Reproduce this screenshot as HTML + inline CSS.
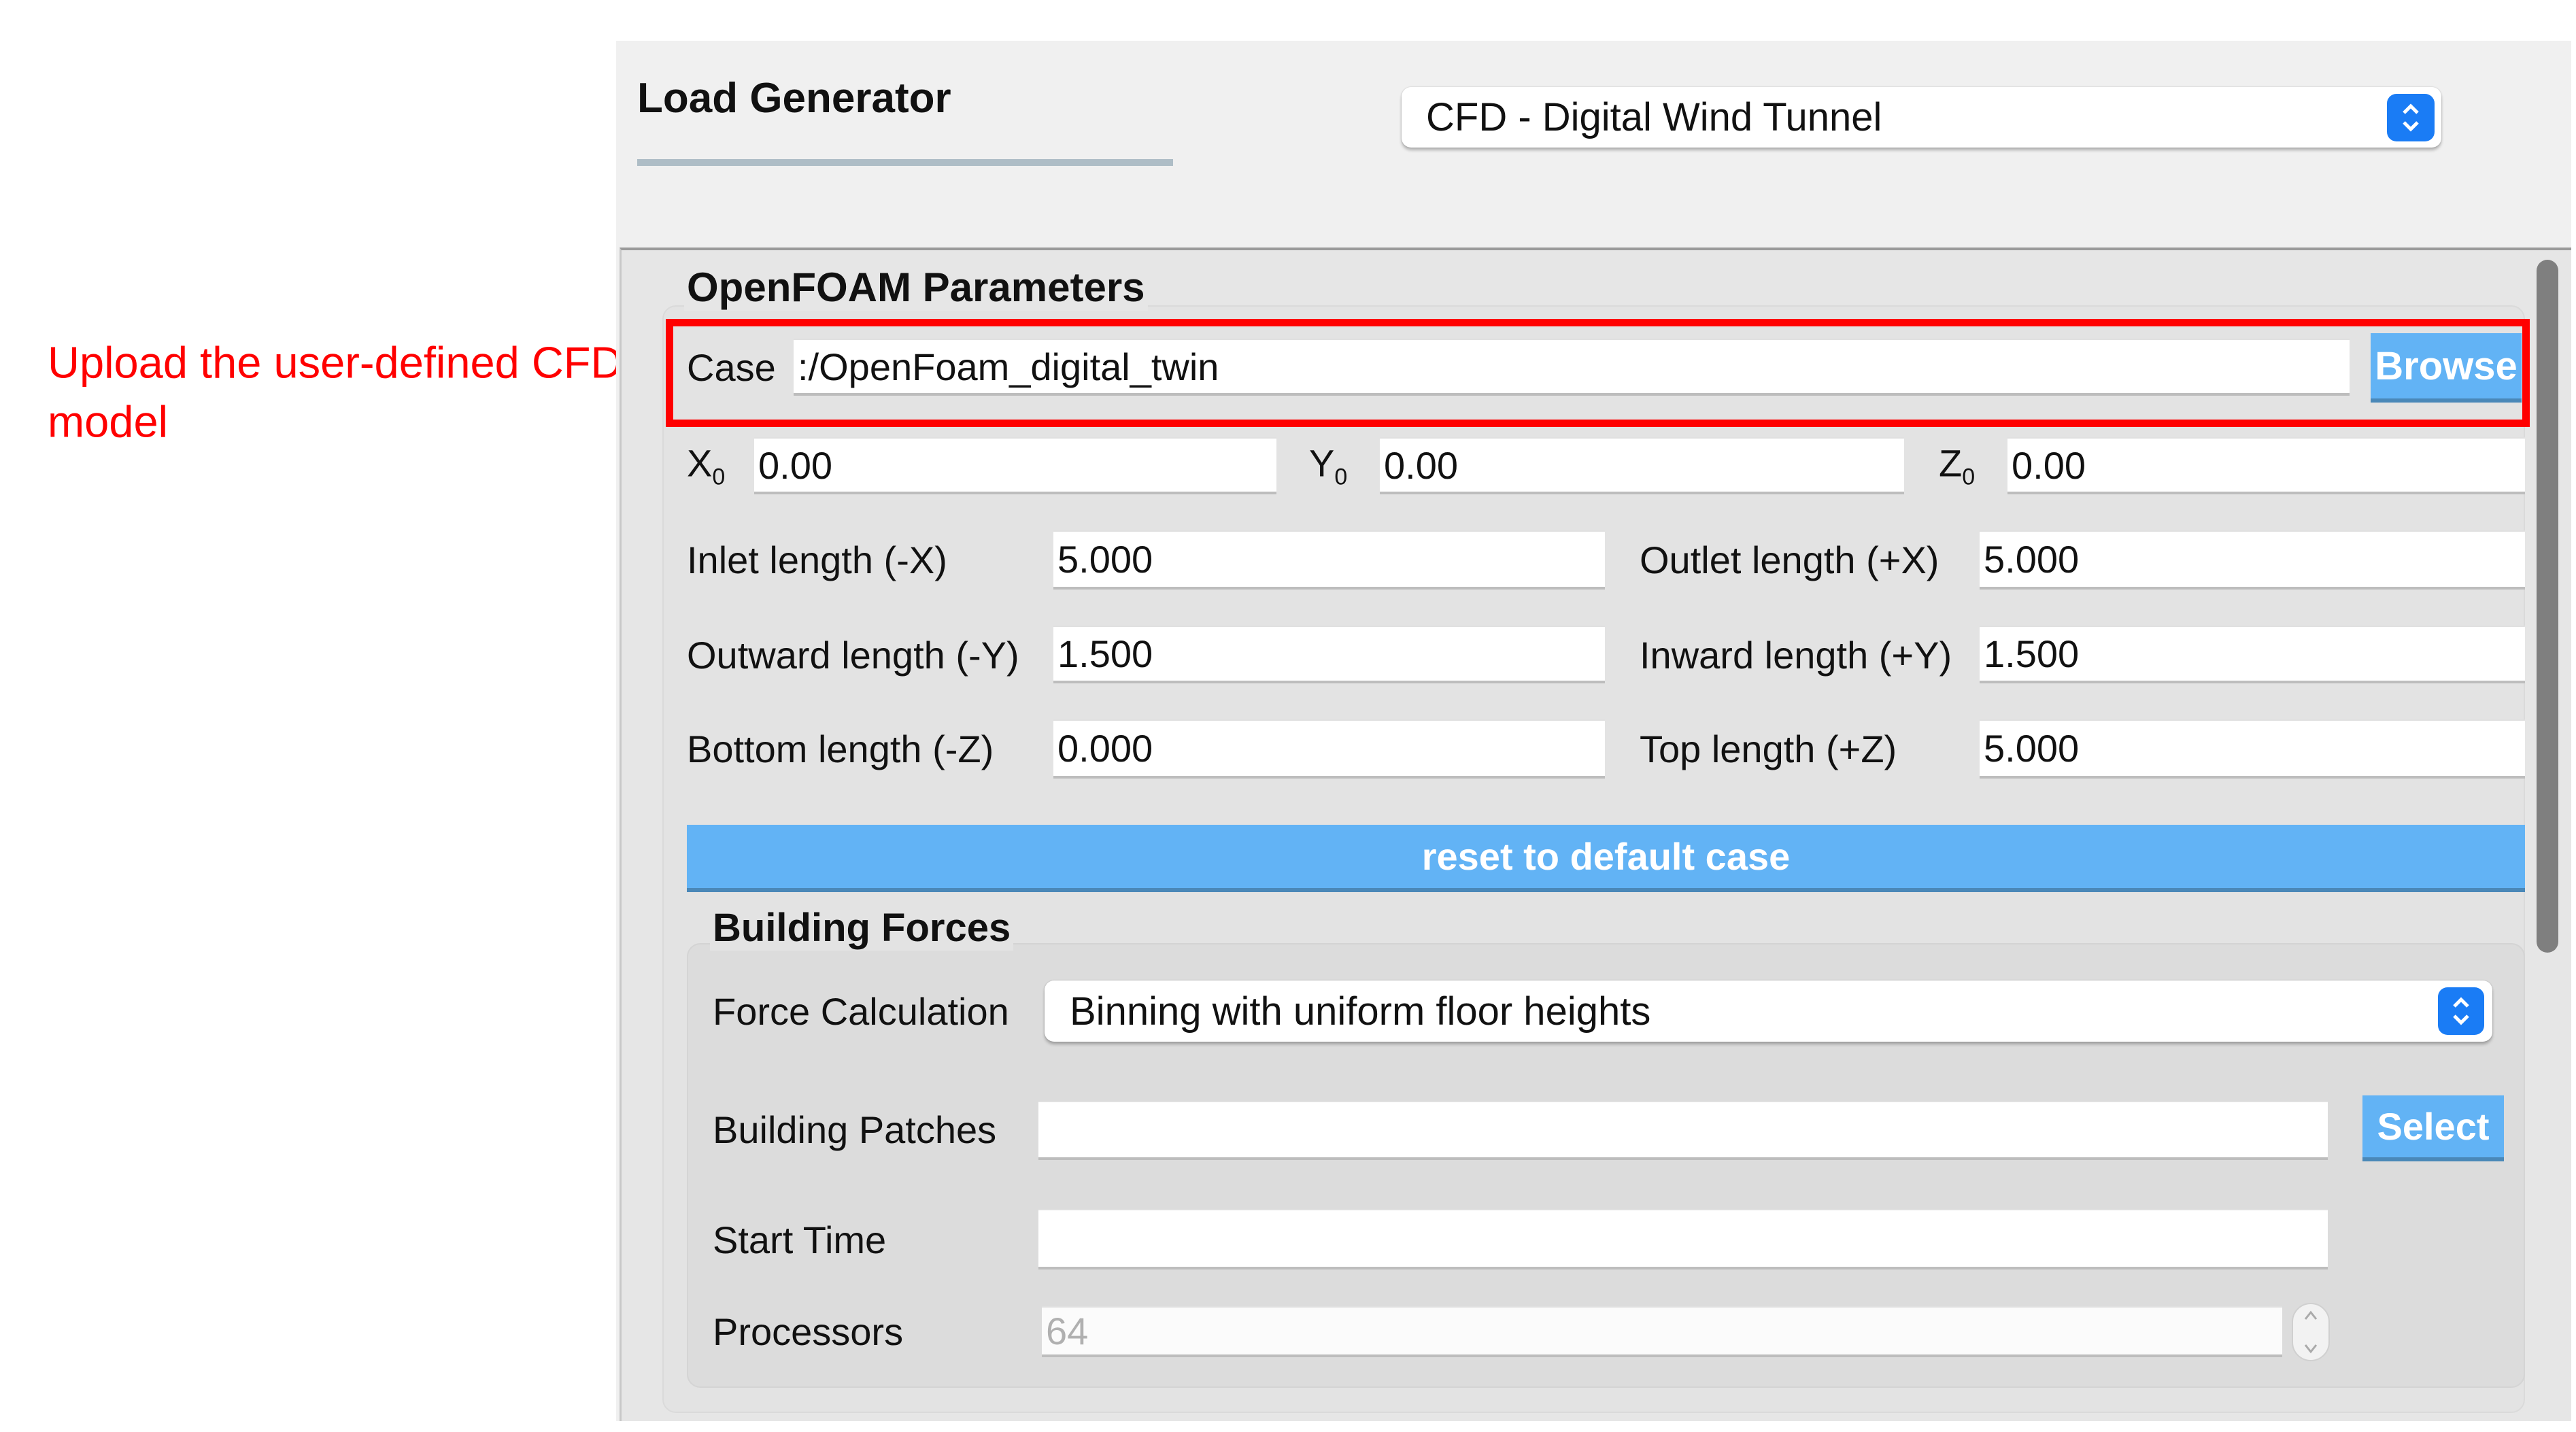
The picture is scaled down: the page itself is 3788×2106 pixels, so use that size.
<!DOCTYPE html>
<html><head><meta charset="utf-8"><style>
*{margin:0;padding:0;box-sizing:border-box}
body{width:3788px;height:2106px;background:#fff;position:relative;overflow:hidden;font-family:"Liberation Sans",sans-serif;color:#111}
.a{position:absolute}
.t{position:absolute;font-size:56px;line-height:1;transform:translateY(-50%);white-space:nowrap}
.b{font-weight:bold}
.in{position:absolute;background:#fff;border-bottom:4px solid #bdbdbd;border-top:2px solid #e0e0e0;font-size:56px;display:flex;align-items:center;padding-left:6px;white-space:nowrap}
.btn{position:absolute;background:#62b3f5;border-bottom:6px solid #4a88b8;color:#fff;font-weight:bold;font-size:56px;display:flex;align-items:center;justify-content:center}
.dd{position:absolute;background:#fff;border-radius:14px;box-shadow:0 4px 4px rgba(0,0,0,.25),0 0 2px rgba(0,0,0,.2);font-size:58px;display:flex;align-items:center}
.arr{position:absolute;background:#1a7cf5;border-radius:14px}
</style></head><body>
<div class="t" style="left:70px;top:533px;color:#f00;font-size:65px">Upload the user-defined CFD</div>
<div class="t" style="left:70px;top:620px;color:#f00;font-size:65px">model</div>

<div class="a" style="left:906px;top:60px;width:2875px;height:2030px;background:#f0f0f0"></div>
<div class="t b" style="left:937px;top:145px;font-size:62px">Load Generator</div>
<div class="a" style="left:937px;top:234px;width:788px;height:10px;background:#aebdc6"></div>
<div class="dd" style="left:2061px;top:128px;width:1529px;height:89px;padding-left:36px">CFD - Digital Wind Tunnel</div>
<div class="arr" style="left:3510px;top:138px;width:70px;height:70px"><svg width="70" height="70" viewBox="0 0 70 70"><path d="M25 28 L35 18 L45 28 M25 42 L35 52 L45 42" stroke="#fff" stroke-width="5" fill="none"/></svg></div>

<div class="a" style="left:911px;top:364px;width:2870px;height:1726px;background:#e6e6e6;border-top:4px solid #9a9a9a;border-left:3px solid #c8c8c8"></div>
<div class="a" style="left:3730px;top:382px;width:32px;height:1019px;background:#7f7f7f;border-radius:16px"></div>
<div class="a" style="left:974px;top:449px;width:2739px;height:1629px;background:#e3e3e3;border-radius:20px;border:2px solid #dadada"></div>
<div class="t b" style="left:1006px;top:423px;font-size:60px;background:#e6e6e6;padding:4px">OpenFOAM Parameters</div>

<div class="a" style="left:979px;top:469px;width:2741px;height:159px;border:11px solid #f00"></div>
<div class="t" style="left:1010px;top:541px">Case</div>
<div class="in" style="left:1167px;top:498px;width:2288px;height:84px">:/OpenFoam_digital_twin</div>
<div class="btn" style="left:3486px;top:490px;width:222px;height:102px;font-size:58px">Browse</div>

<div class="t" style="left:1010px;top:686px">X<sub style="font-size:34px">0</sub></div>
<div class="in" style="left:1109px;top:643px;width:768px;height:84px">0.00</div>
<div class="t" style="left:1925px;top:686px">Y<sub style="font-size:34px">0</sub></div>
<div class="in" style="left:2029px;top:643px;width:771px;height:84px">0.00</div>
<div class="t" style="left:2851px;top:686px">Z<sub style="font-size:34px">0</sub></div>
<div class="in" style="left:2952px;top:643px;width:761px;height:84px">0.00</div>

<div class="t" style="left:1010px;top:824px">Inlet length (-X)</div>
<div class="in" style="left:1549px;top:780px;width:811px;height:87px">5.000</div>
<div class="t" style="left:2411px;top:824px">Outlet length (+X)</div>
<div class="in" style="left:2911px;top:780px;width:802px;height:87px">5.000</div>
<div class="t" style="left:1010px;top:964px">Outward length (-Y)</div>
<div class="in" style="left:1549px;top:920px;width:811px;height:85px">1.500</div>
<div class="t" style="left:2411px;top:964px">Inward length (+Y)</div>
<div class="in" style="left:2911px;top:920px;width:802px;height:85px">1.500</div>
<div class="t" style="left:1010px;top:1102px">Bottom length (-Z)</div>
<div class="in" style="left:1549px;top:1058px;width:811px;height:87px">0.000</div>
<div class="t" style="left:2411px;top:1102px">Top length (+Z)</div>
<div class="in" style="left:2911px;top:1058px;width:802px;height:87px">5.000</div>

<div class="btn" style="left:1010px;top:1213px;width:2703px;height:99px">reset to default case</div>

<div class="a" style="left:1010px;top:1387px;width:2703px;height:654px;background:#dcdcdc;border-radius:20px;border:2px solid #d4d4d4"></div>
<div class="t b" style="left:1044px;top:1365px;font-size:58px;background:#e3e3e3;padding:4px">Building Forces</div>

<div class="t" style="left:1048px;top:1488px">Force Calculation</div>
<div class="dd" style="left:1536px;top:1442px;width:2129px;height:90px;padding-left:37px">Binning with uniform floor heights</div>
<div class="arr" style="left:3585px;top:1452px;width:68px;height:70px"><svg width="68" height="70" viewBox="0 0 68 70"><path d="M24 28 L34 18 L44 28 M24 42 L34 52 L44 42" stroke="#fff" stroke-width="5" fill="none"/></svg></div>

<div class="t" style="left:1048px;top:1662px">Building Patches</div>
<div class="in" style="left:1527px;top:1619px;width:1896px;height:87px"></div>
<div class="btn" style="left:3474px;top:1611px;width:208px;height:97px">Select</div>

<div class="t" style="left:1048px;top:1824px">Start Time</div>
<div class="in" style="left:1527px;top:1778px;width:1896px;height:89px"></div>

<div class="t" style="left:1048px;top:1959px">Processors</div>
<div class="in" style="left:1532px;top:1921px;width:1824px;height:75px;color:#b0b0b0;background:#fbfbfb">64</div>
<div class="a" style="left:3370px;top:1916px;width:56px;height:86px;border-radius:28px;background:#f2f2f2;border:2px solid #d0d0d0"><svg width="52" height="82" viewBox="0 0 52 82"><path d="M18 22 L26 12 L34 22 M18 60 L26 70 L34 60" stroke="#aaa" stroke-width="3" fill="none"/></svg></div>
</body></html>
